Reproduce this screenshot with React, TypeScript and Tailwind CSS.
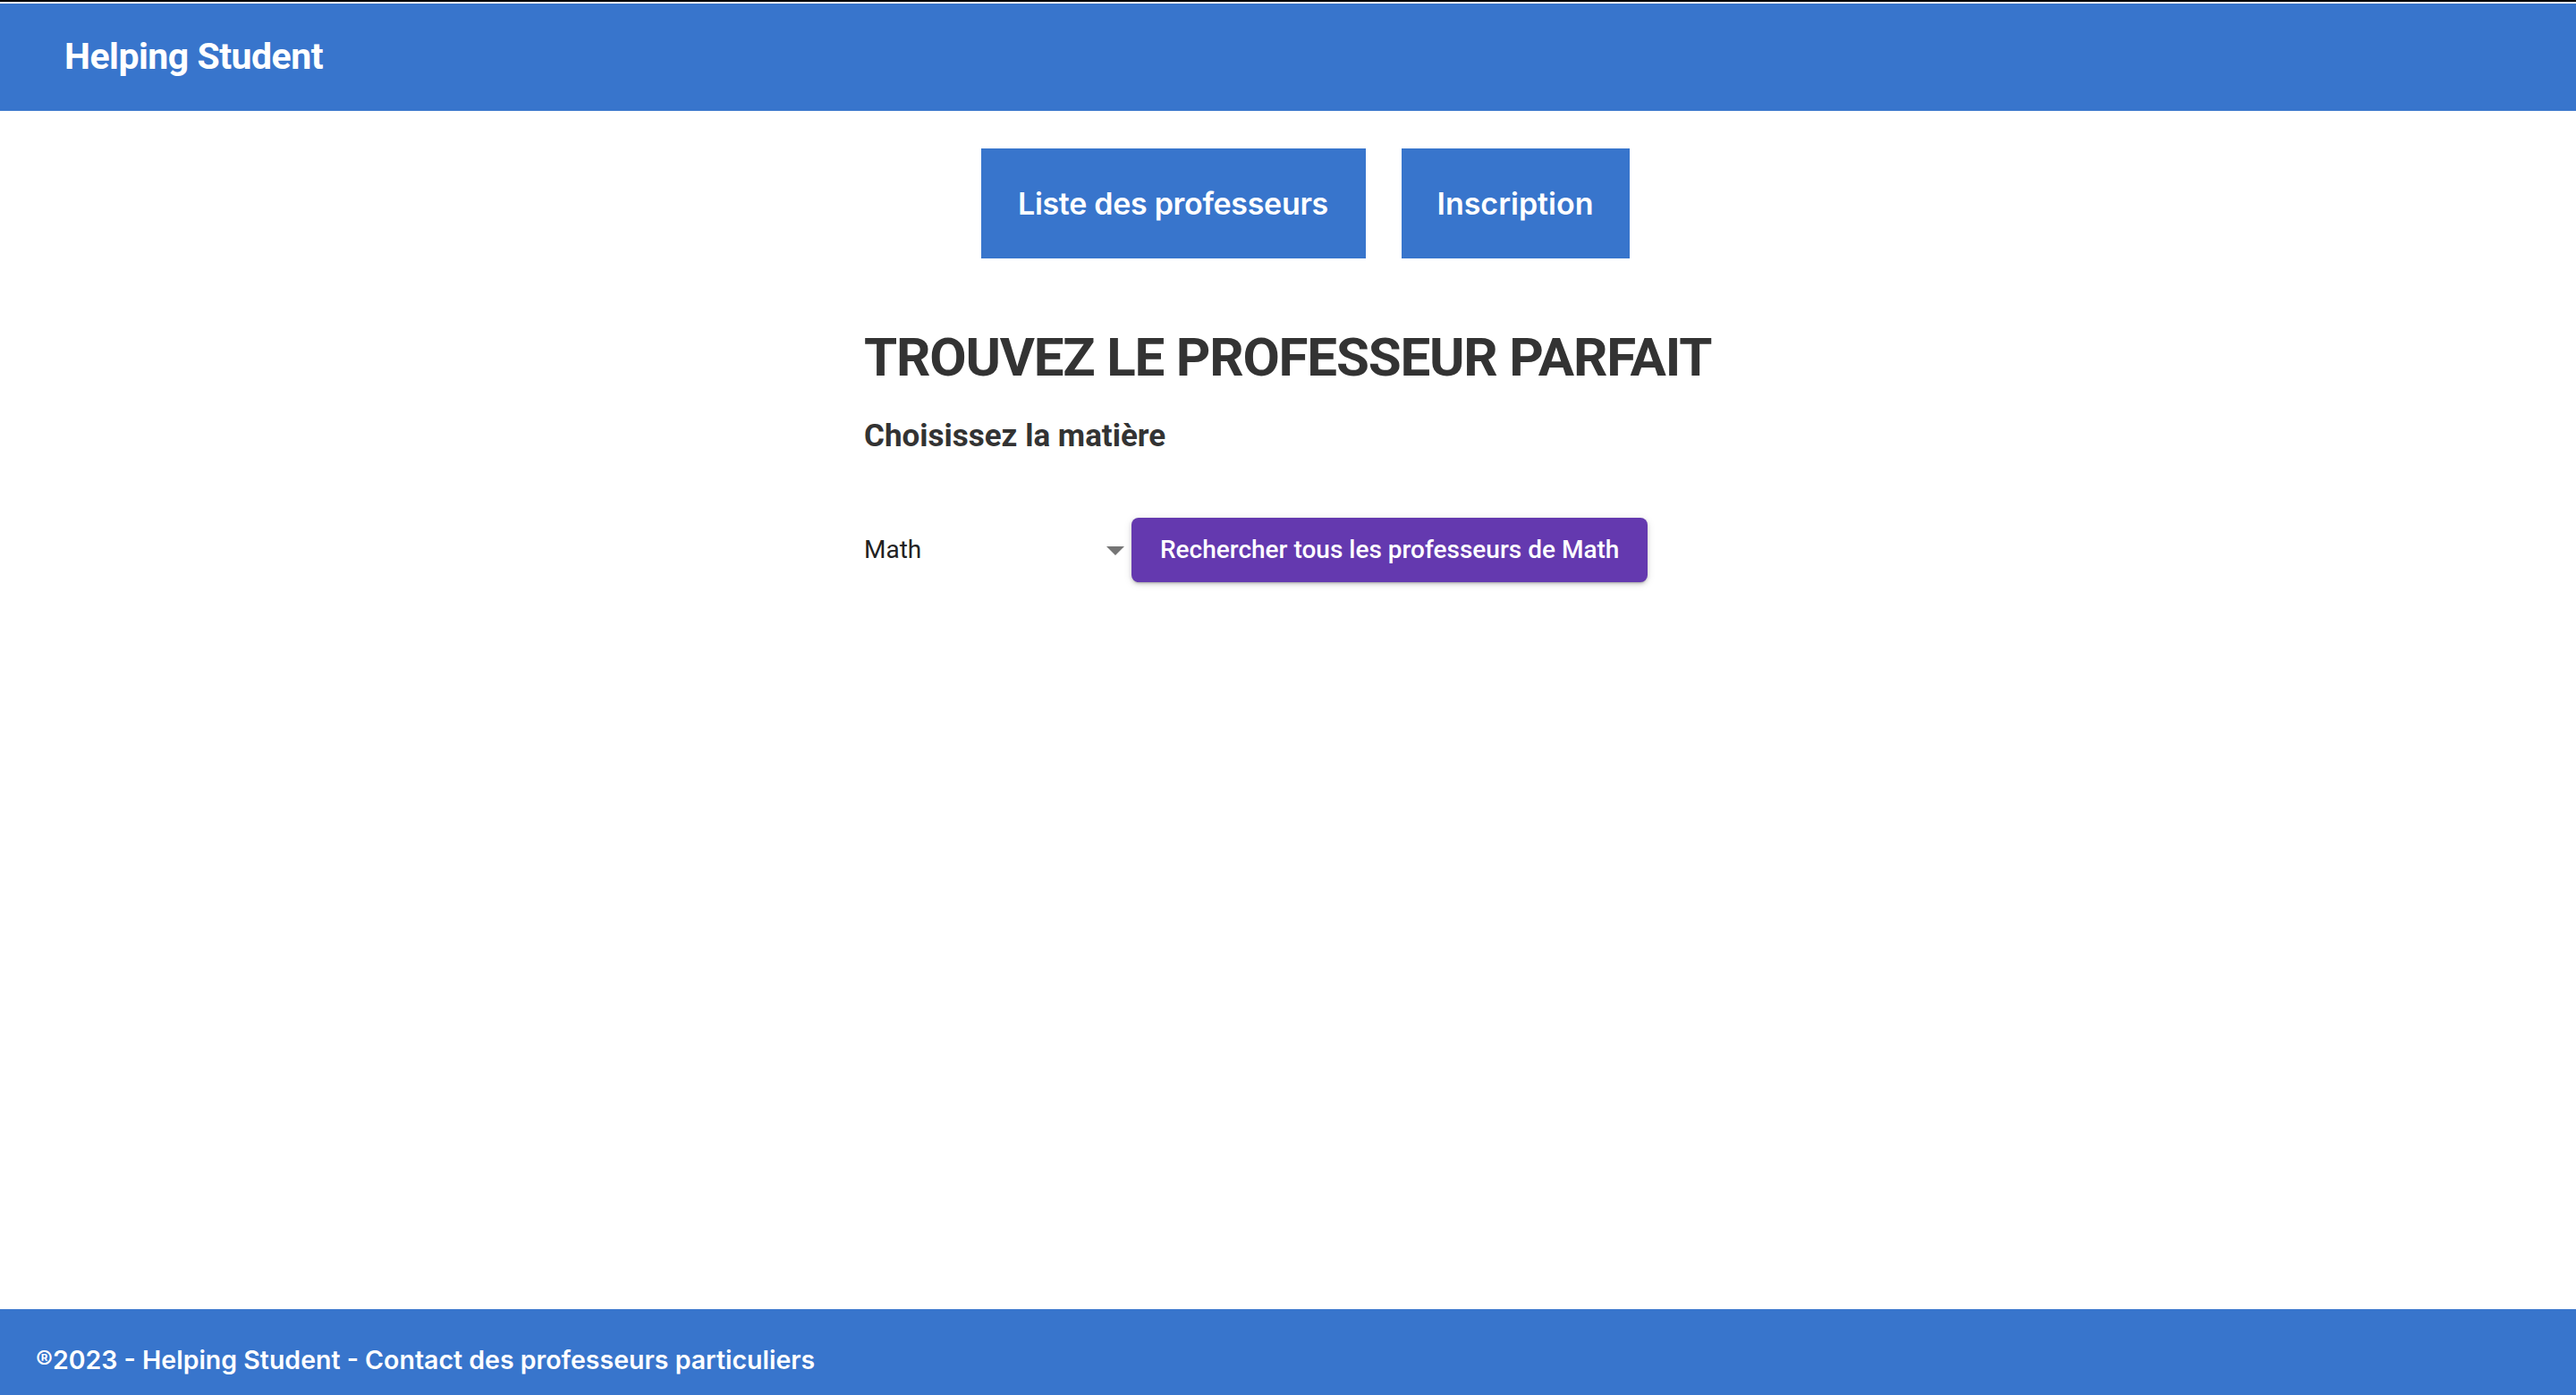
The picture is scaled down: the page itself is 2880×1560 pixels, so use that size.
import { useState } from "react";

const subjects = ["Math", "Physique", "Chimie", "Français", "Anglais"];

const App = () => {
    const [subject, setSubject] = useState("Math");

    return (
        <div className="min-h-screen flex flex-col bg-white">

            {/* top edge */}
            <div className="h-[2px] bg-black" />
            <div className="h-[2px] bg-white" />

            {/* Header */}
            <header className="h-[120px] bg-[#3875cc] flex items-center px-[72px]">
                <h1 className="text-white text-[41px] font-bold tracking-[-0.5px] font-['Roboto',sans-serif]">
                    Helping Student
                </h1>
            </header>

            <main className="flex-1 flex flex-col items-center">

                {/* Nav buttons */}
                <div className="flex gap-[40px] mt-[42px] pl-[38px]">
                    <button className="w-[430px] h-[123px] bg-[#3875cc] text-white text-[34px] font-semibold tracking-[-0.3px] font-['Inter',sans-serif]">
                        Liste des professeurs
                    </button>
                    <button className="w-[255px] h-[123px] bg-[#3875cc] text-white text-[34px] font-semibold font-['Inter',sans-serif]">
                        Inscription
                    </button>
                </div>

                {/* Search */}
                <div className="w-[948px] mt-[75px] text-[#333333] font-['Roboto',sans-serif]">
                    <h2 className="text-[60px] font-bold leading-[72px] tracking-[-1.2px] whitespace-nowrap">
                        TROUVEZ LE PROFESSEUR PARFAIT
                    </h2>
                    <h3 className="text-[35px] font-bold mt-[26px]">
                        Choisissez la matière
                    </h3>

                    <div className="flex items-center gap-[8px] mt-[64px]">
                        <div className="relative w-[291px] h-[70px] flex items-center">
                            <select
                                value={subject}
                                onChange={(e) => setSubject(e.target.value)}
                                className="appearance-none w-full h-full bg-transparent text-[28px] text-[#222222] font-['Roboto',sans-serif] outline-none"
                            >
                                {subjects.map((s) => (
                                    <option key={s} value={s}>{s}</option>
                                ))}
                            </select>
                            <svg className="absolute right-0 top-[31px] pointer-events-none" width="20" height="10" viewBox="0 0 20 10">
                                <path d="M0 0 L20 0 L10 10 Z" fill="#757575" />
                            </svg>
                        </div>
                        <button className="h-[72px] px-[32px] rounded-[8px] bg-[#6439af] text-white text-[28px] font-medium font-['Roboto',sans-serif] shadow-[0_3px_2px_-2px_rgba(0,0,0,0.2),0_2px_4px_0_rgba(0,0,0,0.14),0_2px_10px_0_rgba(0,0,0,0.12)]">
                            Rechercher tous les professeurs de {subject}
                        </button>
                    </div>
                </div>
            </main>

            {/* Footer */}
            <footer className="h-[96px] bg-[#3875cc] flex items-center px-[40px] pt-[18px]">
                <p className="text-white text-[28.5px] font-semibold font-['Inter',sans-serif]">
                    ®2023 - Helping Student - Contact des professeurs particuliers
                </p>
            </footer>
        </div>
    )
}

export default App
